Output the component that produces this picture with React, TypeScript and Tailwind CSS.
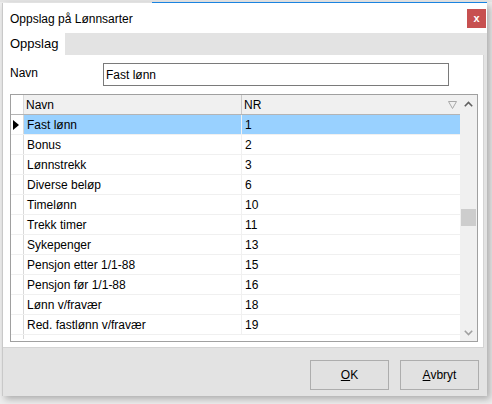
import React from "react";

const rows = [
  { navn: "Fast lønn", nr: "1" },
  { navn: "Bonus", nr: "2" },
  { navn: "Lønnstrekk", nr: "3" },
  { navn: "Diverse beløp", nr: "6" },
  { navn: "Timelønn", nr: "10" },
  { navn: "Trekk timer", nr: "11" },
  { navn: "Sykepenger", nr: "13" },
  { navn: "Pensjon etter 1/1-88", nr: "15" },
  { navn: "Pensjon før 1/1-88", nr: "16" },
  { navn: "Lønn v/fravær", nr: "18" },
  { navn: "Red. fastlønn v/fravær", nr: "19" },
];

const font = { fontFamily: '"Liberation Sans", Arial, sans-serif' };

const App = () => {
  return (
    <div
      className="relative w-[492px] h-[404px] overflow-hidden bg-[#ededed] text-[12px] text-black"
      style={font}
    >
      {/* background window edge */}
      <div className="h-[2px] bg-[#e4e4e4]" />
      <div className="absolute top-[2px] left-[152px] w-[335px] h-[1px] bg-[#1a83e0]" />

      <div className="ml-[2px] mt-[1px] w-[485px] h-[393px] flex flex-col bg-[#e3e3e3] border-l border-[#c9c9c9] shadow-[3px_3px_7px_rgba(0,0,0,0.28)]">
        {/* Title bar */}
        <div className="h-[30px] shrink-0 bg-white flex items-center justify-between pl-[7px] pr-[1px]">
          <span className="mt-[1px]">Oppslag på Lønnsarter</span>
          <button className="w-[19px] h-[19px] mt-[1px] bg-[#c75050] flex items-center justify-center text-white font-bold text-[11px] leading-none">
            x
          </button>
        </div>

        {/* Tab strip */}
        <div className="h-[22px] shrink-0 flex">
          <div className="w-[62px] bg-white flex items-center pl-[7px] text-[13px]">Oppslag</div>
        </div>

        {/* Panel */}
        <div className="h-[293px] shrink-0 mr-[3px] bg-white border-r border-b border-[#d4d4d4] pt-[8px] pl-[7px]">
          <div className="flex items-center h-[23px]">
            <span className="w-[93px] -mt-[3px]">Navn</span>
            <div className="w-[346px] h-[23px] border border-[#7a7a7a] flex items-center pl-[2px]">
              Fast lønn
            </div>
          </div>

          {/* Grid */}
          <div className="mt-[8px] w-[468px] h-[248px] border border-[#a0a0a0] flex">
            <div className="flex flex-col w-[449px]">
              {/* Header */}
              <div className="h-[20px] flex bg-[#f0f0f0] border-b border-[#b4b4b4]">
                <div className="w-[13px] border-r border-[#d9d9d9] bg-white" />
                <div className="w-[218px] border-r border-[#c8c8c8] flex items-center pl-[2px]">Navn</div>
                <div className="w-[218px] flex items-center justify-between pl-[2px] pr-[3px]">
                  <span>NR</span>
                  <svg width="9" height="8" viewBox="0 0 9 8">
                    <polygon points="0.5,0.5 8.5,0.5 4.5,7.5" fill="none" stroke="#a8a8a8" strokeWidth="1" />
                  </svg>
                </div>
              </div>
              {/* Rows */}
              {rows.map((r, i) => (
                <div key={r.nr} className="h-[20px] flex border-b border-[#f0f0f0]">
                  <div className="w-[13px] border-r border-[#d9d9d9] flex items-center pl-[2px]">
                    {i === 0 && (
                      <svg width="6" height="10" viewBox="0 0 6 10">
                        <polygon points="0,0 6,5 0,10" fill="#000" />
                      </svg>
                    )}
                  </div>
                  <div
                    className={`w-[218px] border-r border-[#f0f0f0] flex items-center pl-[3px] ${
                      i === 0 ? "bg-[#99d1ff]" : ""
                    }`}
                  >
                    {r.navn}
                  </div>
                  <div className={`w-[218px] flex items-center pl-[3px] ${i === 0 ? "bg-[#99d1ff]" : ""}`}>
                    {r.nr}
                  </div>
                </div>
              ))}
              <div className="flex-1 flex">
                <div className="w-[13px] border-r border-[#d9d9d9] h-[4px]" />
              </div>
            </div>

            {/* Scrollbar */}
            <div className="w-[17px] bg-[#f0f0f0] flex flex-col items-center">
              <div className="h-[17px] w-full flex items-center justify-center">
                <svg width="9" height="6" viewBox="0 0 9 6">
                  <path d="M0.8 5.2 L4.5 1.5 L8.2 5.2" fill="none" stroke="#606060" strokeWidth="1.6" />
                </svg>
              </div>
              <div className="h-[97px]" />
              <div className="w-[15px] h-[17px] bg-[#cdcdcd]" />
              <div className="flex-1" />
              <div className="h-[17px] w-full flex items-center justify-center">
                <svg width="9" height="6" viewBox="0 0 9 6">
                  <path d="M0.8 0.8 L4.5 4.5 L8.2 0.8" fill="none" stroke="#a0a0a0" strokeWidth="1.6" />
                </svg>
              </div>
            </div>
          </div>
        </div>

        {/* Footer */}
        <div className="flex-1 flex justify-end items-start pt-[12px] pr-[8px] gap-[11px]">
          <button className="w-[79px] h-[30px] bg-[#e1e1e1] border border-[#adadad] flex items-center justify-center">
            <span>
              <span className="underline">O</span>K
            </span>
          </button>
          <button className="w-[79px] h-[30px] bg-[#e1e1e1] border border-[#adadad] flex items-center justify-center">
            <span>
              <span className="underline">A</span>vbryt
            </span>
          </button>
        </div>
      </div>
    </div>
  );
};

export default App;
